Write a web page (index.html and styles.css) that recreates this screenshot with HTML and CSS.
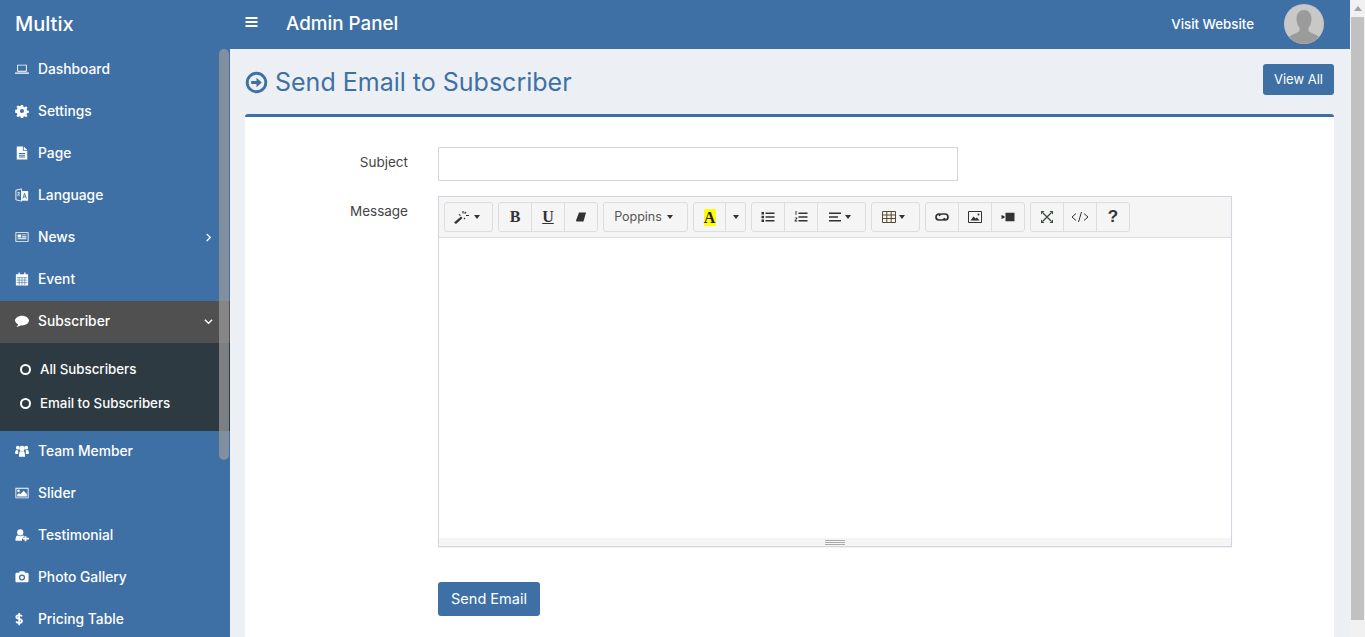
FILE: index.html
```html
<!DOCTYPE html>
<html lang="en">

<head>
    <meta charset="UTF-8">
    <title>Admin Panel</title>
    <link rel="stylesheet" href="styles.css">
</head>

<body>
    <div class="app">
        <header class="topbar">
            <div class="brand">Multix</div>
            <div class="topbar-main">
                <svg class="burger" viewBox="0 0 12 10"><path d="M0 0h12v2H0zM0 4h12v2H0zM0 8h12v2H0z" fill="#fff"/></svg>
                <div class="panel-title">Admin Panel</div>
                <a class="visit">Visit Website</a>
                <svg class="avatar" viewBox="0 0 40 40">
                    <circle cx="20" cy="20" r="20" fill="#c8c8c8"/>
                    <path d="M20 6c5 0 7.500 4 7.500 9 0 4-1.500 7-3 9v3c2 2 7 3 10.500 6a20 20 0 0 1-30 0c3.500-3 8.500-4 10.500-6v-3c-1.500-2-3-5-3-9 0-5 2.500-9 7.500-9z" fill="#9b9b9b"/>
                </svg>
            </div>
        </header>
        <div class="body-row">
            <nav class="sidebar">
                <a class="nav-item">
                    <svg class="nav-icon" viewBox="0 0 16 16"><path d="M2.500 3h11v8h-11zM3.500 4v6h9V4zM0 12h16v1.300H0z" fill="#fff" fill-rule="evenodd"/></svg>
                    <span>Dashboard</span>
                </a>
                <a class="nav-item">
                    <svg class="nav-icon" viewBox="0 0 16 16"><path d="M6.800 1h2.400l.4 2 1.300.6 1.800-1.100 1.600 1.700-1.100 1.700.6 1.400 2 .4v2.400l-2 .4-.6 1.300 1.100 1.800-1.700 1.600-1.700-1.100-1.300.6-.4 2H6.800l-.4-2-1.300-.6-1.800 1.100-1.600-1.700 1.100-1.700-.6-1.300-2-.4V6.700l2-.4.6-1.300-1.100-1.800 1.700-1.600 1.700 1.100 1.300-.6zM8 5.800a2.300 2.300 0 1 0 0 4.600 2.300 2.300 0 0 0 0-4.600z" fill="#fff" fill-rule="evenodd"/></svg>
                    <span>Settings</span>
                </a>
                <a class="nav-item">
                    <svg class="nav-icon" viewBox="0 0 16 16"><path d="M2 0.500h7v5h5v10H2zM10 .5l4 4h-4zM4.500 8v1h7V8zM4.500 10v1h7v-1zM4.500 12v1h7v-1z" fill="#fff" fill-rule="evenodd"/></svg>
                    <span>Page</span>
                </a>
                <a class="nav-item">
                    <svg class="nav-icon" viewBox="0 0 16 16"><path d="M1 2.500l6.500-1.500v14L1 13.500z" fill="none" stroke="#fff"/><path d="M7 3.500h8v11H7z" fill="#fff"/><path d="M9 12l2-6 2 6M9.700 10h2.600" fill="none" stroke="#3e70a5"/><path d="M2.500 5.500h3M4 4.500v1M5 5.500c-.3 2-1.500 3-2.500 3.500M3 7c.5 1 1.500 1.700 2.500 2" fill="none" stroke="#fff" stroke-width=".8"/></svg>
                    <span>Language</span>
                </a>
                <a class="nav-item">
                    <svg class="nav-icon" viewBox="0 0 16 16"><path d="M.5 2.500h15v11H.5zM1.500 3.500v9h13v-9z" fill="#fff" fill-rule="evenodd"/><path d="M3 5h4v3.500H3zM8 5h5v1H8zM8 7h5v1.500H8zM3 9.500h10v1H3z" fill="#fff"/></svg>
                    <span>News</span>
                    <svg class="chevron" viewBox="0 0 8 10"><path d="M2 1l4 4-4 4" fill="none" stroke="#fff" stroke-width="1.500"/></svg>
                </a>
                <a class="nav-item">
                    <svg class="nav-icon" viewBox="0 0 16 16"><path d="M1 2.500h14V15.500H1zM4 .5h1.500V4H4zM10.500 .5H12V4h-1.500z" fill="#fff"/><path d="M2 6.500h12M2 9.300h12M2 12.100h12M4.800 6v8.800M8 6v8.800M11.200 6v8.800" stroke="#3e70a5" stroke-width=".7"/></svg>
                    <span>Event</span>
                </a>
                <a class="nav-item nav-open">
                    <svg class="nav-icon" viewBox="0 0 16 16"><path d="M8 2c4.200 0 8 2.500 8 5.500S12.200 13 8 13l-1.200-.1C5.400 14 3.500 14.500 1.500 14.800c1-.8 1.800-1.800 2-3.100C1.500 10.700 0 9.200 0 7.500 0 4.500 3.800 2 8 2z" fill="#fff"/></svg>
                    <span>Subscriber</span>
                    <svg class="chevron" viewBox="0 0 10 8"><path d="M1 2l4 4 4-4" fill="none" stroke="#fff" stroke-width="1.500"/></svg>
                </a>
                <div class="submenu">
                    <a class="sub-item"><i class="ring"></i><span>All Subscribers</span></a>
                    <a class="sub-item"><i class="ring"></i><span>Email to Subscribers</span></a>
                </div>
                <a class="nav-item">
                    <svg class="nav-icon" viewBox="0 0 16 16"><circle cx="3.200" cy="4.200" r="2.200" fill="#fff"/><circle cx="12.800" cy="4.200" r="2.200" fill="#fff"/><circle cx="8" cy="5" r="3" fill="#fff"/><path d="M0 10.500c0-2.500 1-3.700 2-3.700l2 .5C3.500 8 3.500 9.500 3.800 11.500H1zM16 10.500c0-2.500-1-3.700-2-3.700l-2 .5c.500.7.500 2.200.2 4.200H15zM4.500 14.500c0-4.500 1-6.500 2-6.500l1.500.7L9.500 8c1 0 2 2 2 6.500z" fill="#fff"/></svg>
                    <span>Team Member</span>
                </a>
                <a class="nav-item">
                    <svg class="nav-icon" viewBox="0 0 16 16"><path d="M.5 2h15v12H.5zM1.500 3v10h13V3z" fill="#fff" fill-rule="evenodd"/><circle cx="4" cy="5.500" r="1.500" fill="#fff"/><path d="M2.500 12v-2l2-2 1.500 1.500 4-4 3.500 3.500v3z" fill="#fff"/></svg>
                    <span>Slider</span>
                </a>
                <a class="nav-item">
                    <svg class="nav-icon" viewBox="0 0 16 16"><circle cx="6" cy="5" r="3.500" fill="#fff"/><path d="M.5 14.500c0-4 1-6 2.500-6L6 9.500l3-1c.8 0 1.500.5 2 1.500H9.500v2H8v2.500zM11 9.500h2V11h3v2h-3v2h-2v-2H9v-2h2z" fill="#fff"/></svg>
                    <span>Testimonial</span>
                </a>
                <a class="nav-item">
                    <svg class="nav-icon" viewBox="0 0 16 16"><path d="M5.500 1.500h5l1 1.500H14c.8 0 1.500.7 1.500 1.500v8c0 .8-.7 1.500-1.500 1.500H2c-.8 0-1.500-.7-1.500-1.500v-8C.5 3.700 1.200 3 2 3h2.500zM8 5a3.500 3.500 0 1 0 0 7 3.500 3.500 0 0 0 0-7z" fill="#fff" fill-rule="evenodd"/><circle cx="8" cy="8.500" r="2" fill="#fff"/></svg>
                    <span>Photo Gallery</span>
                </a>
                <a class="nav-item">
                    <svg class="nav-icon" viewBox="0 0 16 16"><path d="M10.500 5C10 4 9 3.500 7.500 3.500 5.500 3.500 4 4.300 4 5.700c0 3 6.500 1.500 6.500 4.600 0 1.500-1.500 2.200-3.200 2.200-1.500 0-2.800-.6-3.500-1.700M7.300 1v14" fill="none" stroke="#fff" stroke-width="2" transform="translate(-2.500 0)"/></svg>
                    <span>Pricing Table</span>
                </a>
                <div class="sidebar-thumb"></div>
            </nav>
            <main class="content">
                <div class="page-head">
                    <h1 class="page-title">
                        <svg class="title-icon" viewBox="0 0 24 24"><circle cx="12" cy="12" r="9.700" fill="none" stroke="#3e70a5" stroke-width="3"/><path d="M6.500 10.500H12V7l5.500 5-5.500 5v-3.500H6.500z" fill="#3e70a5"/></svg>
                        <span>Send Email to Subscriber</span>
                    </h1>
                    <a class="btn btn-view">View All</a>
                </div>
                <section class="card">
                    <div class="form-row">
                        <label class="form-label">Subject</label>
                        <input class="text-input" type="text">
                    </div>
                    <div class="form-row">
                        <label class="form-label">Message</label>
                        <div class="editor">
                            <div class="toolbar">
                                <div class="tb-group">
                                    <div class="tb-btn w47 pull">
                                        <svg class="tb-icon wand" viewBox="0 0 18 14"><path d="M1 12.500l7-6 1.500 1.500-6.500 6z" fill="#333"/><path d="M10 1v2.500M13 5.500h3M6 4.500l1.500 1M13 2l-1.500 1.500M12 9l-1-1" stroke="#333" stroke-width="1.200" fill="none"/></svg>
                                        <i class="caret"></i>
                                    </div>
                                </div>
                                <div class="tb-group">
                                    <div class="tb-btn"><b class="serif-b">B</b></div>
                                    <div class="tb-btn"><b class="serif-b under">U</b></div>
                                    <div class="tb-btn">
                                        <svg class="tb-icon" viewBox="0 0 14 14"><path d="M5 2.500h7L9.500 11.500h-7L2 10.500z" fill="#333"/></svg>
                                    </div>
                                </div>
                                <div class="tb-group">
                                    <div class="tb-btn w83 pull"><span class="font-name">Poppins</span><i class="caret"></i></div>
                                </div>
                                <div class="tb-group">
                                    <div class="tb-btn w31"><b class="serif-b color-a">A</b></div>
                                    <div class="tb-btn w20"><i class="caret"></i></div>
                                </div>
                                <div class="tb-group">
                                    <div class="tb-btn">
                                        <svg class="tb-icon" viewBox="0 0 14 14"><path d="M.5 2h2.500v2.500H.5zM.5 5.800h2.500v2.500H.5zM.5 9.500h2.500V12H.5zM4.500 2.500h9V4h-9zM4.500 6.300h9v1.500h-9zM4.500 10h9v1.500h-9z" fill="#333"/></svg>
                                    </div>
                                    <div class="tb-btn">
                                        <svg class="tb-icon" viewBox="0 0 14 14"><path d="M4.500 2.500h9V4h-9zM4.500 6.300h9v1.500h-9zM4.500 10h9v1.500h-9zM1.500 1h1v3.800h-1zM.8 7.500h2.500v1L1.800 10.500h1.500v.9H.6v-.8L2.300 8.500v-.2H.8z" fill="#333"/></svg>
                                    </div>
                                    <div class="tb-btn w48 pull">
                                        <svg class="tb-icon" viewBox="0 0 14 14"><path d="M1 2.500h12v1.600H1zM1 6.200h9v1.600H1zM1 9.900h12v1.600H1z" fill="#333"/></svg>
                                        <i class="caret"></i>
                                    </div>
                                </div>
                                <div class="tb-group">
                                    <div class="tb-btn w47 pull">
                                        <svg class="tb-icon" viewBox="0 0 14 14"><path d="M.5 1.500h13v11H.5zM.5 5h13M.5 8.500h13M4.800 1.500v11M9.200 1.500v11" fill="none" stroke="#5a4a30"/></svg>
                                        <i class="caret"></i>
                                    </div>
                                </div>
                                <div class="tb-group">
                                    <div class="tb-btn">
                                        <svg class="tb-icon" viewBox="0 0 14 14"><path d="M5.500 4H4a3 3 0 0 0 0 6h3a3 3 0 0 0 2.800-2M8.500 10H10a3 3 0 0 0 0-6H7a3 3 0 0 0-2.800 2" fill="none" stroke="#333" stroke-width="1.700"/></svg>
                                    </div>
                                    <div class="tb-btn">
                                        <svg class="tb-icon" viewBox="0 0 14 14"><path d="M.5 1.500h13v11H.5z" fill="none" stroke="#333"/><path d="M2.500 10.500L5.500 6.500l2 2 1.500-1 2.500 3z" fill="#333"/><circle cx="10.500" cy="4.500" r="1" fill="#333"/></svg>
                                    </div>
                                    <div class="tb-btn">
                                        <svg class="tb-icon" viewBox="0 0 14 14"><path d="M4.500 2.800h9v8.400h-9zM.5 5l3 1.200v1.600L.5 9z" fill="#333"/></svg>
                                    </div>
                                </div>
                                <div class="tb-group">
                                    <div class="tb-btn">
                                        <svg class="tb-icon" viewBox="0 0 14 14"><path d="M3 3l8 8M11 3l-8 8" stroke="#3a4a40" stroke-width="1.300"/><path d="M1 1h3.500L1 4.500zM13 1H9.500L13 4.500zM1 13h3.500L1 9.500zM13 13H9.500L13 9.500z" fill="#3a4a40"/></svg>
                                    </div>
                                    <div class="tb-btn">
                                        <svg class="tb-icon code" viewBox="0 0 18 12"><path d="M5 2.500L1 6l4 3.500M13 2.500L17 6l-4 3.500M10.500 1l-3 10" fill="none" stroke="#333"/></svg>
                                    </div>
                                    <div class="tb-btn"><b class="help">?</b></div>
                                </div>
                            </div>
                            <div class="editor-area"></div>
                            <div class="resize-bar"><i class="grip"></i></div>
                        </div>
                    </div>
                    <div class="form-actions">
                        <a class="btn btn-send">Send Email</a>
                    </div>
                </section>
            </main>
        </div>
    </div>
    <div class="page-scroll">
        <i class="scroll-arrow"></i>
        <div class="scroll-thumb"></div>
    </div>
</body>

</html>
```

FILE: styles.css
```css
* {
    box-sizing: border-box;
}

html,
body {
    height: 100%;
    margin: 0;
    overflow: hidden;
}

body {
    display: flex;
    background: #ecf0f5;
    color: #333;
    font: 13px/20px Inter, "Open Sans", sans-serif;
}

svg {
    display: block;
    flex: none;
}

.app {
    flex: 1;
    min-width: 0;
    display: flex;
    flex-direction: column;
    height: 637px;
    overflow: hidden;
}

/* top bar */
.topbar {
    flex: none;
    display: flex;
    height: 49px;
    background: #3e70a5;
    color: #fff;
}

.brand {
    width: 230px;
    padding: 12px 15px;
    font-size: 20px;
    line-height: 24px;
    font-weight: 500;
}

.topbar-main {
    flex: 1;
    display: flex;
    align-items: center;
    padding-bottom: 2px;
}

.burger {
    width: 13px;
    height: 10px;
    margin: 0 0 3px 15px;
}

.panel-title {
    flex: 1;
    margin-left: 28px;
    font-size: 18.800px;
    font-weight: 500;
}

.visit {
    font-size: 13.300px;
    font-weight: 500;
}

.avatar {
    width: 40px;
    height: 40px;
    margin: 0 26px 0 30px;
}

.body-row {
    flex: 1;
    display: flex;
    min-height: 0;
}

/* sidebar */
.sidebar {
    position: relative;
    flex: none;
    width: 230px;
    background: #3e70a5;
    overflow: hidden;
}

.nav-item {
    display: flex;
    align-items: center;
    height: 42px;
    padding: 0 17px 2px 15px;
    color: #fff;
    font-size: 13.800px;
    font-weight: 500;
}

.nav-icon {
    width: 14px;
    height: 14px;
    margin-right: 9px;
}

.nav-item span {
    flex: 1;
}

.chevron {
    width: 9px;
    height: 9px;
}

.nav-open {
    background: #505050;
}

.submenu {
    height: 88px;
    padding: 9px 0 0 20px;
    background: #2d3a42;
}

.sub-item {
    display: flex;
    align-items: center;
    height: 34px;
    color: #fff;
    font-size: 13.300px;
    font-weight: 500;
}

.ring {
    width: 11px;
    height: 11px;
    margin-right: 9px;
    border: 2px solid #fff;
    border-radius: 50%;
}

.sidebar-thumb {
    position: absolute;
    top: 0;
    left: 219px;
    width: 10px;
    height: 411px;
    background: rgba(155, 155, 155, .72);
    border-radius: 5px;
}

/* main */
.content {
    flex: 1;
    min-width: 0;
    padding: 0 16px 0 15px;
}

.page-head {
    display: flex;
    height: 65px;
}

.page-title {
    flex: 1;
    display: flex;
    align-items: center;
    height: 66px;
    margin: 0;
    color: #3e70a5;
    font-size: 25px;
    line-height: 30px;
    font-weight: 400;
}

.title-icon {
    width: 23px;
    height: 23px;
    margin-right: 7px;
}

.btn {
    display: block;
    background: #3e70a5;
    color: #fff;
    font-size: 14px;
    border-radius: 3px;
    text-align: center;
}

.btn-view {
    width: 71px;
    height: 31px;
    margin-top: 15px;
    font-size: 13px;
    line-height: 30px;
}

.card {
    height: 560px;
    padding: 30px 0 0;
    background: #fff;
    border-top: 3px solid #3e70a5;
    border-radius: 3px 3px 0 0;
}

.form-row {
    display: flex;
    margin-bottom: 15px;
}

.form-label {
    width: 163px;
    margin-right: 30px;
    padding-top: 5px;
    text-align: right;
    font-size: 13.500px;
    color: #444;
}

.text-input {
    width: 520px;
    height: 34px;
    padding: 0 12px;
    background: #fff;
    border: 1px solid #d2d6de;
}

/* editor */
.editor {
    width: 794px;
    height: 351px;
    border: 1px solid #d2d6de;
    box-shadow: 0 1px 1px rgba(0, 0, 0, .05);
}

.toolbar {
    display: flex;
    gap: 5px;
    height: 41px;
    padding: 5px 0 0 5px;
    background: #f5f5f5;
    border-bottom: 1px solid #ddd;
}

.tb-group {
    display: flex;
    height: 30px;
    border: 1px solid #ddd;
    border-radius: 3px;
}

.tb-btn {
    display: flex;
    align-items: center;
    justify-content: center;
    gap: 2px;
    width: 33px;
    border-left: 1px solid #ddd;
}

.tb-btn:first-child {
    width: 32px;
    border-left: 0;
}

.tb-btn.w20 {
    width: 20px;
}

.tb-btn.w31 {
    width: 31px;
}

.tb-btn.w47 {
    width: 47px;
}

.tb-btn.w48 {
    width: 48px;
}

.tb-btn.w83 {
    width: 83px;
}

/* text and icon sit left of centre in the dropdown buttons */
.pull {
    padding-right: 4px;
}

.tb-icon {
    width: 14px;
    height: 14px;
}

.wand {
    width: 18px;
}

.code {
    width: 18px;
}

.caret {
    width: 0;
    height: 0;
    margin-left: 1px;
    border-top: 4px solid #333;
    border-left: 3px solid transparent;
    border-right: 3px solid transparent;
}

.serif-b {
    font: 700 16px/16px "Liberation Serif", serif;
    color: #333;
}

.under {
    text-decoration: underline;
}

.color-a {
    width: 12px;
    background: #ff0;
    color: #222;
    line-height: 17px;
    text-align: center;
}

.font-name {
    margin-right: 2px;
    font-size: 12.500px;
    color: #555;
}

.help {
    font: 700 17px/16px "Liberation Sans", sans-serif;
    color: #333;
}

.editor-area {
    height: 300px;
    background: #fff;
}

.resize-bar {
    display: flex;
    justify-content: center;
    align-items: center;
    height: 8px;
    background: #f5f5f5;
}

.grip {
    width: 20px;
    height: 5px;
    border-top: 1px solid #a9a9a9;
    border-bottom: 1px solid #a9a9a9;
    background: linear-gradient(#a9a9a9, #a9a9a9) center / 100% 1px no-repeat;
}

.form-actions {
    margin: 35px 0 0 193px;
}

.btn-send {
    width: 102px;
    height: 34px;
    font-size: 14.500px;
    line-height: 34px;
}

/* page scrollbar */
.page-scroll {
    flex: none;
    display: flex;
    flex-direction: column;
    align-items: center;
    width: 15px;
    height: 637px;
    background: #f1f1f1;
}

.scroll-arrow {
    width: 0;
    height: 0;
    margin: 6px 0;
    border-bottom: 5px solid #a3a3a3;
    border-left: 4px solid transparent;
    border-right: 4px solid transparent;
}

.scroll-thumb {
    width: 13px;
    height: 603px;
    background: #c1c1c1;
}
```
